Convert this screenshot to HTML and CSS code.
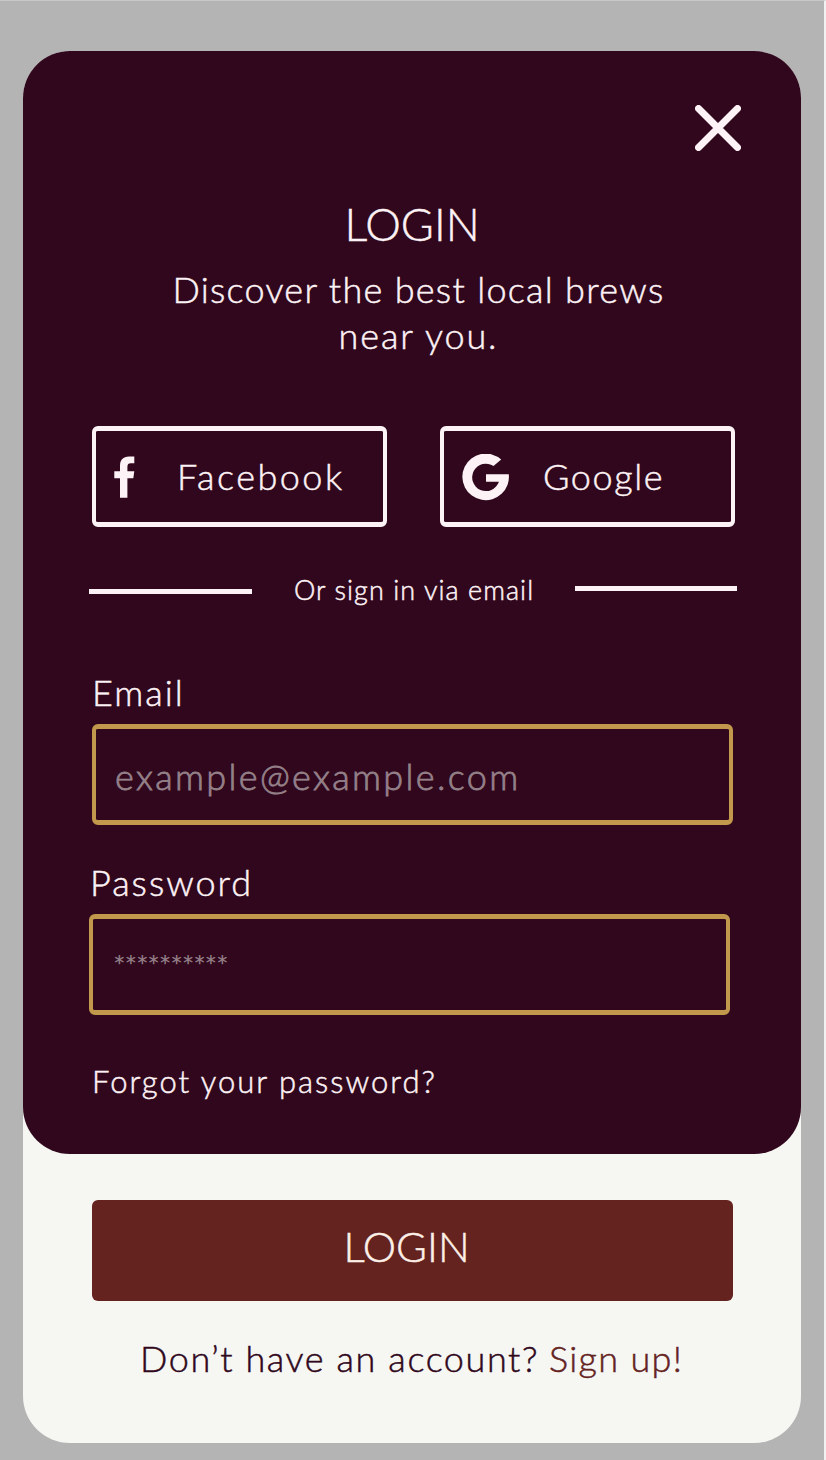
FILE: index.html
```html
<!DOCTYPE html>
<html lang="en">
<head>
<meta charset="utf-8">
<title>Login</title>
<link rel="stylesheet" href="styles.css">
</head>
<body>
<main class="card">
  <section class="panel">
    <button class="close" aria-label="Close">
      <svg width="46" height="46" viewBox="0 0 46 46"><path d="M3.500 3.500 42.500 42.500M42.500 3.500 3.500 42.500" fill="none" stroke="currentColor" stroke-width="7" stroke-linecap="round"/></svg>
    </button>
    <h1 class="title">LOGIN</h1>
    <p class="tagline"><span class="tag-a">Discover the best local brews</span><br><span class="tag-b">near you.</span></p>
    <div class="social">
      <button class="social-btn facebook">
        <svg class="f-icon" width="21" height="42" viewBox="0 0 21 42"><path fill="currentColor" d="M20.300.5H15C9 .5 6 4 6 9.500v5.800H.3v7H6v19.400h7.400V22.300h5.900l1-7h-6.900V11c0-2.700 1-3.700 3.400-3.700h3.500z"/></svg>
        <span>Facebook</span>
      </button>
      <button class="social-btn google">
        <svg class="g-icon" width="48" height="48" viewBox="0 0 48 48"><path fill="currentColor" d="M39.200 5.500A23.300 23.300 0 1 0 46.800 20.300H24V27.700H36.900A13.700 13.700 0 1 1 31.500 12Z"/></svg>
        <span>Google</span>
      </button>
    </div>
    <div class="divider"><i class="rule"></i><span class="divider-text">Or sign in via email</span><i class="rule rule-end"></i></div>
    <div class="field">
      <div class="label email-label">Email</div>
      <div class="input email-input">example@example.com</div>
    </div>
    <div class="field field-password">
      <div class="label password-label">Password</div>
      <div class="input password-input">**********</div>
    </div>
    <a class="forgot">Forgot your password?</a>
  </section>
  <button class="submit"><span>LOGIN</span></button>
  <p class="signup"><span class="question">Don’t have an account?</span><a class="signup-link">Sign up!</a></p>
</main>
</body>
</html>
```
FILE: styles.css
```css
* { box-sizing: border-box; margin: 0; padding: 0; }
body {
  height: 1460px;
  padding: 50px 22px 0 23px;
  background: #b4b4b4;
  border-top: 1px solid #c6c8ca;
  border-right: 2px solid #f1f1f1;
  font-family: Lato, "Open Sans", sans-serif;
  font-weight: 300;
  -webkit-text-stroke: 0.5px currentColor;
  overflow: hidden;
}
button { background: none; border: 0; font: inherit; color: inherit; }
.card { width: 778px; height: 1392px; background: #f6f7f2; border-radius: 47px; }
.panel {
  display: flex;
  flex-direction: column;
  height: 1103px;
  padding: 54px 60px 0 66px;
  background: #30071c;
  border-radius: 47px;
  color: #fdf2f5;
  white-space: nowrap;
}
.close { align-self: flex-end; height: 46px; width: 46px; }
.close svg, .social-btn svg { display: block; }
.title { margin-top: 46px; line-height: 54px; font-size: 45px; font-weight: 300; text-align: center; padding-right: 6px; }
.tagline { margin-top: 15px; line-height: 46px; font-size: 36px; text-align: center; padding-left: 7px; letter-spacing: 1.3px; }
.tag-b { letter-spacing: 1.9px; }
.social { display: flex; gap: 53px; margin: 68px 0 0 3px; }
.social-btn {
  display: flex;
  flex-shrink: 0;
  align-items: center;
  width: 295px;
  height: 101px;
  border: solid #fdf2f5;
  border-width: 5px 4px;
  border-radius: 6px;
  font-size: 36px;
  letter-spacing: 2.5px;
}
.facebook { padding-left: 18px; gap: 42px; }
.google { padding-left: 18px; gap: 33px; letter-spacing: 1.6px; }
.social-btn span { margin-top: -1px; }
.g-icon { margin-top: 2px; }
.divider { display: flex; align-items: center; height: 40px; margin-top: 43px; width: 648px; font-size: 27px; letter-spacing: 1.05px; }
.rule { width: 163px; height: 5px; background: #fdf2f5; margin-top: 2px; }
.rule-end { width: 162px; margin: 0 0 3px auto; }
.divider-text { margin-left: 42px; line-height: 40px; }
.field { width: 641px; margin: 62px 0 0 3px; }
.field-password { margin: 37px 0 0; }
.label { height: 52px; line-height: 40px; font-size: 36px; letter-spacing: 2px; }
.password-label { padding-left: 1px; }
.input {
  height: 101px;
  border: solid #c2984c;
  border-width: 5px 4px;
  border-radius: 6px;
  padding-left: 19px;
  color: #948089;
}
.email-input { font-size: 36px; line-height: 95px; letter-spacing: 2.35px; -webkit-text-stroke-width: 0.8px; }
.password-input { font-size: 30px; line-height: 92px; padding-left: 20px; letter-spacing: -1.3px; }
.forgot { margin: 46px 0 0 3px; line-height: 40px; font-size: 31px; letter-spacing: 2px; }
.submit {
  display: block;
  width: 641px;
  height: 101px;
  margin: 46px 0 0 69px;
  padding: 0 12px 10px 0;
  border-radius: 6px;
  background: #64231f;
  color: #fdf0e8;
  font-size: 42px;
}
.signup { display: flex; margin: 37px 0 0 117px; line-height: 40px; font-size: 36px; color: #30071c; white-space: nowrap; }
.question { width: 409px; letter-spacing: 1.6px; }
.signup-link { color: #64231f; letter-spacing: 1.3px; }
```
